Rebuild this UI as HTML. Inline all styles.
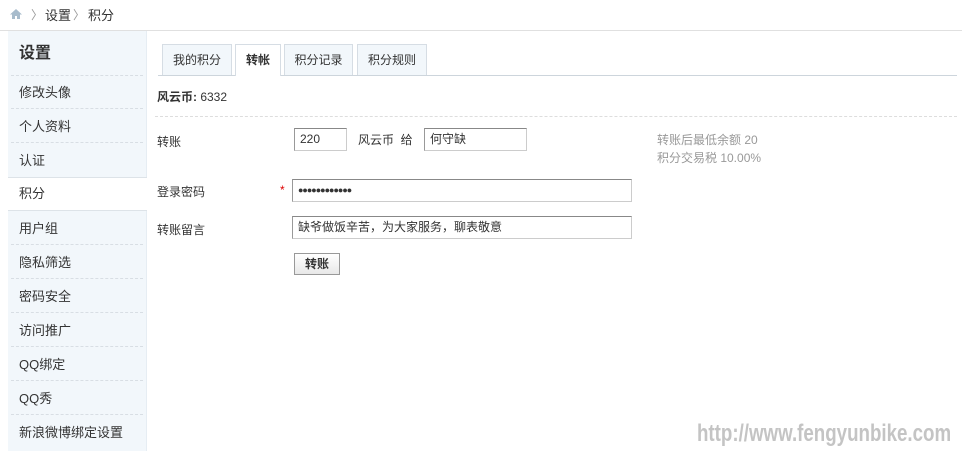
<!DOCTYPE html>
<html><head><meta charset="utf-8"><style>
body{margin:0;width:962px;height:451px;overflow:hidden;background:#fff;font-family:"Liberation Sans","Noto Sans CJK SC",sans-serif;font-size:12px;color:#333;position:relative}
.a{position:absolute}
.side{left:8px;top:31px;width:138px;height:420px;background:#f2f7fb;border-right:1px solid #e6edf3}
.it{position:absolute;left:3px;width:132px;height:33px;line-height:33px;padding-left:8px;font-size:13px;border-bottom:1px dashed #d8dee4;box-sizing:border-box}
.tab{position:absolute;top:44px;height:31px;line-height:31px;text-align:center;background:#f2f7fb;border:1px solid #d6dde4;border-bottom:none;box-sizing:border-box}
.inp{position:absolute;border:1px solid #ccc;border-top-color:#888;border-left-color:#999;box-sizing:border-box;height:23px;line-height:21px;padding-left:5px;font-size:12px;background:#fff}
</style></head><body>
<div class="a" style="left:0;top:30px;width:962px;height:1px;background:#e0e0e0"></div>
<svg class="a" style="left:9px;top:8px" width="14" height="12" viewBox="0 0 14 12"><path d="M7 1L1 6.5h2V11h3V8h2v3h3V6.5h2z" fill="#a8bccc"/></svg>
<div class="a" style="left:31px;top:6px;color:#999">〉</div>
<div class="a" style="left:45px;top:5px;font-size:13px">设置</div>
<div class="a" style="left:73px;top:6px;color:#999">〉</div>
<div class="a" style="left:88px;top:5px;font-size:13px">积分</div>

<div class="a side"></div>
<div class="a" style="left:11px;top:31px;width:132px;height:45px;line-height:45px;padding-left:8px;font-size:16px;font-weight:bold;border-bottom:1px dashed #d8dee4;box-sizing:border-box">设置</div>
<div class="it" style="top:76px;left:11px">修改头像</div>
<div class="it" style="top:110px;left:11px">个人资料</div>
<div class="it" style="top:144px;left:11px;border-bottom:none">认证</div>
<div class="a" style="left:8px;top:177px;width:139px;height:34px;background:#fff;border-top:1px solid #dde3e8;border-bottom:1px solid #dde3e8;box-sizing:border-box;line-height:32px;padding-left:11px;font-size:13px">积分</div>
<div class="it" style="top:212px;left:11px">用户组</div>
<div class="it" style="top:246px;left:11px">隐私筛选</div>
<div class="it" style="top:280px;left:11px">密码安全</div>
<div class="it" style="top:314px;left:11px">访问推广</div>
<div class="it" style="top:348px;left:11px">QQ绑定</div>
<div class="it" style="top:382px;left:11px">QQ秀</div>
<div class="it" style="top:416px;left:11px;border-bottom:none">新浪微博绑定设置</div>

<div class="a" style="left:158px;top:75px;width:799px;height:1px;background:#cdd5dc"></div>
<div class="tab" style="left:162px;width:70px">我的积分</div>
<div class="tab" style="left:235px;width:46px;background:#fff;height:32px;font-weight:bold">转帐</div>
<div class="tab" style="left:284px;width:69px">积分记录</div>
<div class="tab" style="left:357px;width:70px">积分规则</div>

<div class="a" style="left:157px;top:88px"><b>风云币:</b> 6332</div>
<div class="a" style="left:155px;top:116px;width:802px;border-top:1px dashed #ddd"></div>

<div class="a" style="left:157px;top:133px">转账</div>
<div class="inp" style="left:294px;top:128px;width:53px">220</div>
<div class="a" style="left:358px;top:131px">风云币 &nbsp;给</div>
<div class="inp" style="left:424px;top:128px;width:103px">何守缺</div>
<div class="a" style="left:657px;top:131px;color:#999;line-height:18px">转账后最低余额 20<br>积分交易税 10.00%</div>

<div class="a" style="left:157px;top:183px">登录密码</div>
<div class="a" style="left:280px;top:183px;color:#d00">*</div>
<div class="inp" style="left:292px;top:179px;width:340px;font-size:9px;letter-spacing:-1px">●●●●●●●●●●●●</div>
<div class="a" style="left:157px;top:221px">转账留言</div>
<div class="inp" style="left:292px;top:216px;width:340px">缺爷做饭辛苦，为大家服务，聊表敬意</div>
<div class="a" style="left:294px;top:253px;width:46px;height:22px;border:1px solid #999;background:linear-gradient(#fff,#e8e8e8);box-sizing:border-box;text-align:center;line-height:20px;font-weight:bold">转账</div>

<div class="a" style="left:697px;top:420px;font-family:'Liberation Sans',sans-serif;font-weight:bold;font-size:24px;color:#c4c4c4;transform:scaleX(0.78);transform-origin:left;white-space:nowrap">http://www.fengyunbike.com</div>
</body></html>
